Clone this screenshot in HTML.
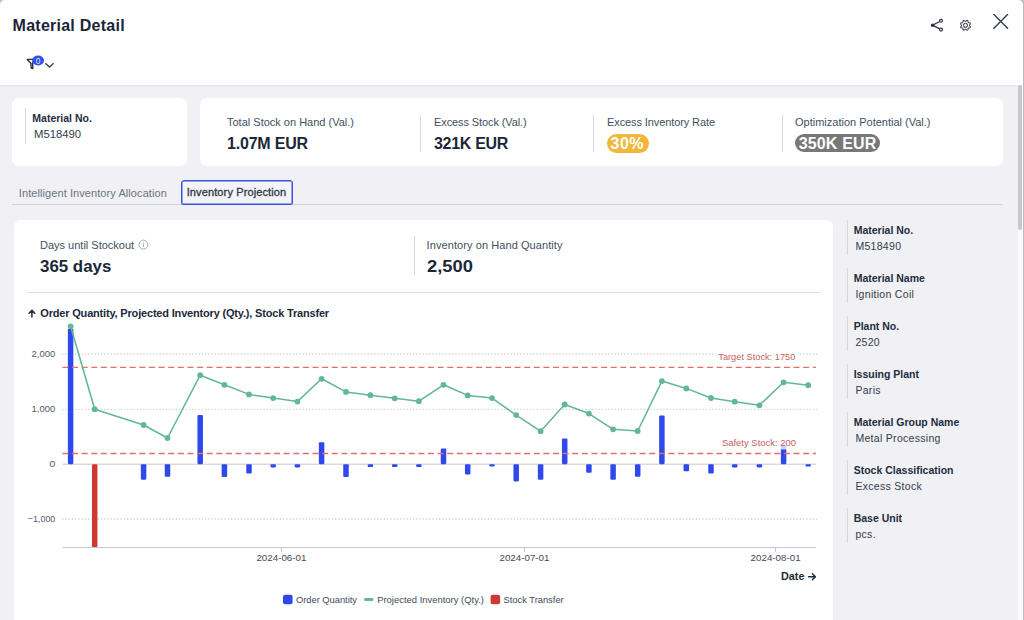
<!DOCTYPE html>
<html><head><meta charset="utf-8">
<style>
html,body{margin:0;padding:0;}
body{width:1024px;height:620px;overflow:hidden;position:relative;background:#bcbcc1;font-family:"Liberation Sans",sans-serif;color:#1d2d3e;}
#dlg{position:absolute;left:0;top:0;width:1023px;height:620px;background:#f0f0f5;border-radius:5px 5px 0 0;overflow:hidden;}
#hdr{position:absolute;left:0;top:0;width:1023px;height:84.6px;background:#fff;box-shadow:0 1px 1.5px rgba(40,40,80,0.05);z-index:1;}
.t{position:absolute;line-height:1;white-space:nowrap;}
.card{position:absolute;background:#fff;border-radius:6.5px;}
.vd{position:absolute;width:1px;background:#d5d9de;}
.lbl{font-size:11px;color:#434f5e;}
.val{font-size:16px;font-weight:700;color:#1b2738;}
.sl{font-size:10.5px;font-weight:700;color:#1d2d3e;}
.sv{font-size:10.5px;color:#323d4b;}
</style></head><body>
<div id="dlg">
  <div id="hdr">
    <div class="t" style="left:12.6px;top:17.7px;font-size:16px;font-weight:700;color:#1a2538;letter-spacing:0.25px">Material Detail</div>
    <!-- filter icon -->
    <svg style="position:absolute;left:20px;top:50px" width="40" height="25" viewBox="20 50 40 25">
      <path d="M27.2 59.4 L34 59.4 L32.6 63.2 L32.9 68.6 L31.2 68 L30.9 63.2 Z" fill="none" stroke="#2a3240" stroke-width="1.4" stroke-linejoin="round"/>
      <ellipse cx="38.1" cy="60.5" rx="5.9" ry="4.9" fill="#3150e6"/>
      <text x="38.1" y="63.6" font-size="8.4" fill="#dfe6ff" text-anchor="middle" font-family="Liberation Sans">0</text>
      <path d="M45.4 63.2 L49.5 67 L53.6 63.2" fill="none" stroke="#3a4250" stroke-width="1.3"/>
    </svg>
    <!-- share icon -->
    <svg style="position:absolute;left:925px;top:14px" width="90" height="22" viewBox="925 14 90 22">
      <path d="M939.8 21.5 L932.5 25.2 L939.8 28.9" fill="none" stroke="#2e3440" stroke-width="1.3"/>
      <circle cx="941" cy="20.8" r="1.45" fill="#fff" stroke="#2e3440" stroke-width="1.2"/>
      <circle cx="932.5" cy="25.2" r="1.7" fill="#2e3440"/>
      <circle cx="941" cy="29.6" r="1.45" fill="#fff" stroke="#2e3440" stroke-width="1.2"/>
      <g transform="translate(965.5 25.3) rotate(22.5)" fill="none" stroke="#4f5562" stroke-width="1.2"><path d="M5.20 0.00 L5.11 0.33 L4.86 0.64 L4.51 0.90 L4.15 1.11 L3.86 1.31 L3.70 1.53 L3.66 1.80 L3.72 2.15 L3.82 2.56 L3.89 2.98 L3.85 3.38 L3.68 3.68 L3.38 3.85 L2.98 3.89 L2.56 3.82 L2.15 3.72 L1.80 3.66 L1.53 3.70 L1.31 3.86 L1.11 4.15 L0.90 4.51 L0.64 4.86 L0.33 5.11 L0.00 5.20 L-0.33 5.11 L-0.64 4.86 L-0.90 4.51 L-1.11 4.15 L-1.31 3.86 L-1.53 3.70 L-1.80 3.66 L-2.15 3.72 L-2.56 3.82 L-2.98 3.89 L-3.38 3.85 L-3.68 3.68 L-3.85 3.38 L-3.89 2.98 L-3.82 2.56 L-3.72 2.15 L-3.66 1.80 L-3.70 1.53 L-3.86 1.31 L-4.15 1.11 L-4.51 0.90 L-4.86 0.64 L-5.11 0.33 L-5.20 0.00 L-5.11 -0.33 L-4.86 -0.64 L-4.51 -0.90 L-4.15 -1.11 L-3.86 -1.31 L-3.70 -1.53 L-3.66 -1.80 L-3.72 -2.15 L-3.82 -2.56 L-3.89 -2.98 L-3.85 -3.38 L-3.68 -3.68 L-3.38 -3.85 L-2.98 -3.89 L-2.56 -3.82 L-2.15 -3.72 L-1.80 -3.66 L-1.53 -3.70 L-1.31 -3.86 L-1.11 -4.15 L-0.90 -4.51 L-0.64 -4.86 L-0.33 -5.11 L-0.00 -5.20 L0.33 -5.11 L0.64 -4.86 L0.90 -4.51 L1.11 -4.15 L1.31 -3.86 L1.53 -3.70 L1.80 -3.66 L2.15 -3.72 L2.56 -3.82 L2.98 -3.89 L3.38 -3.85 L3.68 -3.68 L3.85 -3.38 L3.89 -2.98 L3.82 -2.56 L3.72 -2.15 L3.66 -1.80 L3.70 -1.53 L3.86 -1.31 L4.15 -1.11 L4.51 -0.90 L4.86 -0.64 L5.11 -0.33 Z" stroke-linejoin="round"/><circle cx="0" cy="0" r="2"/></g>
      <path d="M993.5 14 L1008 28.8 M1008 14 L993.5 28.8" stroke="#3a4656" stroke-width="1.5" fill="none"/>
    </svg>
  </div>

  <!-- card 1 -->
  <div class="card" style="left:12px;top:97.5px;width:175.2px;height:68.2px;"></div>
  <div class="vd" style="left:25px;top:107.5px;height:36px;"></div>
  <div class="t sl" style="left:32.3px;top:112.6px;">Material No.</div>
  <div class="t sv" style="left:33.8px;top:128.8px;transform:scaleX(1.075);transform-origin:0 0">M518490</div>

  <!-- card 2 KPI -->
  <div class="card" style="left:200.2px;top:97.5px;width:803px;height:68.8px;"></div>
  <div class="t lbl" style="left:227px;top:117.3px;">Total Stock on Hand (Val.)</div>
  <div class="t val" style="left:227px;top:135.8px;letter-spacing:-0.2px">1.07M EUR</div>
  <div class="vd" style="left:420px;top:115px;height:37px;"></div>
  <div class="t lbl" style="left:434px;top:117.3px;letter-spacing:-0.1px">Excess Stock (Val.)</div>
  <div class="t val" style="left:434px;top:135.8px;letter-spacing:-0.3px">321K EUR</div>
  <div class="vd" style="left:593px;top:115px;height:37px;"></div>
  <div class="t lbl" style="left:607px;top:117.3px;letter-spacing:-0.1px">Excess Inventory Rate</div>
  <div style="position:absolute;left:607px;top:133.6px;width:41.5px;height:19.4px;border-radius:10px;background:#f0b73a;"></div>
  <div class="t" style="left:610.5px;top:135.8px;font-size:16px;font-weight:700;color:#fff;letter-spacing:0.5px">30%</div>
  <div class="vd" style="left:781.5px;top:115px;height:37px;"></div>
  <div class="t lbl" style="left:795px;top:117.3px;">Optimization Potential (Val.)</div>
  <div style="position:absolute;left:795px;top:133.7px;width:85.3px;height:18.8px;border-radius:10px;background:#787878;"></div>
  <div class="t" style="left:798.7px;top:135.5px;font-size:16px;font-weight:700;color:#fff;letter-spacing:0.15px">350K EUR</div>

  <!-- tabs -->
  <div style="position:absolute;left:12px;top:204px;width:991px;height:1px;background:#cfd3da;"></div>
  <div class="t" style="left:18.8px;top:187.7px;font-size:11px;color:#6b7480;letter-spacing:0.08px">Intelligent Inventory Allocation</div>
  <div style="position:absolute;left:181px;top:180px;width:110px;height:23px;border:1px solid #3a55e0;box-shadow:inset 0 0 0 0.5px #3a55e0;border-radius:3px 3px 1.5px 1.5px;background:#f3f3f8;"></div>
  <div class="t" style="left:186.7px;top:187.2px;font-size:11px;color:#303846;letter-spacing:0.12px;-webkit-text-stroke:0.3px #303846">Inventory Projection</div>

  <!-- chart card -->
  <div class="card" style="left:14.4px;top:220.3px;width:818.4px;height:420px;"></div>
  <div class="t lbl" style="left:40px;top:239.7px;">Days until Stockout</div>
  <svg style="position:absolute;left:137px;top:239px" width="13" height="13" viewBox="137 239 13 13">
    <circle cx="143.4" cy="244.6" r="4.5" fill="none" stroke="#9aa3ad" stroke-width="0.9"/>
    <path d="M143.4 243.5 L143.4 247" stroke="#9aa3ad" stroke-width="0.9"/>
    <circle cx="143.4" cy="242.2" r="0.55" fill="#9aa3ad"/>
  </svg>
  <div class="t val" style="left:40.1px;top:258.6px;transform:scaleX(1.055);transform-origin:0 0">365 days</div>
  <div class="vd" style="left:413.5px;top:236px;height:39px;"></div>
  <div class="t lbl" style="left:426.6px;top:239.7px;letter-spacing:0.08px">Inventory on Hand Quantity</div>
  <div class="t val" style="left:427.2px;top:258.6px;transform:scaleX(1.145);transform-origin:0 0">2,500</div>
  <div style="position:absolute;left:27px;top:292px;width:793px;height:1.2px;background:#dcdfe4;"></div>

  <svg style="position:absolute;left:26px;top:307px" width="10" height="12" viewBox="26 307 10 12"><path d="M31.9 316.9 L31.9 310.4 M29.1 313.2 L31.9 310.4 L34.7 313.2" fill="none" stroke="#1d2a3a" stroke-width="1.5" stroke-linecap="round" stroke-linejoin="round"/></svg>
  <div class="t" style="left:40.3px;top:307.8px;font-size:11px;font-weight:700;color:#1d2a3a;letter-spacing:-0.18px">Order Quantity, Projected Inventory (Qty.), Stock Transfer</div>

  <svg id="chart" style="position:absolute;left:0;top:0" width="1023" height="620" viewBox="0 0 1023 620">
<line x1="62" y1="354" x2="817.5" y2="354" stroke="#cfd2d8" stroke-width="1.3" stroke-dasharray="1.3 1.95"/>
<line x1="62" y1="409.3" x2="817.5" y2="409.3" stroke="#cfd2d8" stroke-width="1.3" stroke-dasharray="1.3 1.95"/>
<line x1="62" y1="519" x2="817.5" y2="519" stroke="#cfd2d8" stroke-width="1.3" stroke-dasharray="1.3 1.95"/>
<line x1="62.5" y1="464.2" x2="816" y2="464.2" stroke="#c3c8d4" stroke-width="1"/>
<line x1="62.5" y1="547.5" x2="816" y2="547.5" stroke="#c3c7d0" stroke-width="1.1"/>
<line x1="281.4" y1="547.2" x2="281.4" y2="552" stroke="#b8bcc3" stroke-width="0.9"/>
<line x1="524.5" y1="547.2" x2="524.5" y2="552" stroke="#b8bcc3" stroke-width="0.9"/>
<line x1="775.6" y1="547.2" x2="775.6" y2="552" stroke="#b8bcc3" stroke-width="0.9"/>
<text x="31.599999999999998" y="356.6" font-size="9.6" fill="#4f5b69" font-family="Liberation Sans" textLength="23.7" lengthAdjust="spacingAndGlyphs">2,000</text>
<text x="31.599999999999998" y="411.9" font-size="9.6" fill="#4f5b69" font-family="Liberation Sans" textLength="23.7" lengthAdjust="spacingAndGlyphs">1,000</text>
<text x="49.5" y="467.3" font-size="9.6" fill="#4f5b69" font-family="Liberation Sans" textLength="5.8" lengthAdjust="spacingAndGlyphs">0</text>
<text x="27.799999999999997" y="521.9" font-size="9.6" fill="#4f5b69" font-family="Liberation Sans" textLength="27.5" lengthAdjust="spacingAndGlyphs">−1,000</text>
<text x="281.4" y="560.8" font-size="9.8" fill="#3f4a58" text-anchor="middle" font-family="Liberation Sans" textLength="50" lengthAdjust="spacingAndGlyphs">2024-06-01</text>
<text x="524.5" y="560.8" font-size="9.8" fill="#3f4a58" text-anchor="middle" font-family="Liberation Sans" textLength="50" lengthAdjust="spacingAndGlyphs">2024-07-01</text>
<text x="775.6" y="560.8" font-size="9.8" fill="#3f4a58" text-anchor="middle" font-family="Liberation Sans" textLength="50" lengthAdjust="spacingAndGlyphs">2024-08-01</text>
<rect x="67.85" y="328.70" width="5.5" height="135.50" rx="1.1" fill="#2f48ec"/>
<rect x="91.95" y="464.20" width="5.5" height="82.80" rx="1.1" fill="#cc3a33"/>
<rect x="140.85" y="464.20" width="5.5" height="15.50" rx="1.1" fill="#2f48ec"/>
<rect x="164.75" y="464.20" width="5.5" height="12.60" rx="1.1" fill="#2f48ec"/>
<rect x="197.45" y="415.10" width="5.5" height="49.10" rx="1.1" fill="#2f48ec"/>
<rect x="221.65" y="464.20" width="5.5" height="12.80" rx="1.1" fill="#2f48ec"/>
<rect x="246.25" y="464.20" width="5.5" height="9.40" rx="1.1" fill="#2f48ec"/>
<rect x="270.45" y="464.20" width="5.5" height="3.20" rx="1.1" fill="#2f48ec"/>
<rect x="294.65" y="464.20" width="5.5" height="3.20" rx="1.1" fill="#2f48ec"/>
<rect x="318.85" y="442.20" width="5.5" height="22.00" rx="1.1" fill="#2f48ec"/>
<rect x="343.25" y="464.20" width="5.5" height="12.80" rx="1.1" fill="#2f48ec"/>
<rect x="367.65" y="464.20" width="5.5" height="2.80" rx="1.1" fill="#2f48ec"/>
<rect x="391.95" y="464.20" width="5.5" height="2.80" rx="1.1" fill="#2f48ec"/>
<rect x="416.15" y="464.20" width="5.5" height="2.80" rx="1.1" fill="#2f48ec"/>
<rect x="440.75" y="448.60" width="5.5" height="15.60" rx="1.1" fill="#2f48ec"/>
<rect x="464.95" y="464.20" width="5.5" height="10.30" rx="1.1" fill="#2f48ec"/>
<rect x="489.25" y="464.20" width="5.5" height="2.20" rx="1.1" fill="#2f48ec"/>
<rect x="513.45" y="464.20" width="5.5" height="17.20" rx="1.1" fill="#2f48ec"/>
<rect x="537.85" y="464.20" width="5.5" height="15.60" rx="1.1" fill="#2f48ec"/>
<rect x="561.95" y="438.40" width="5.5" height="25.80" rx="1.1" fill="#2f48ec"/>
<rect x="586.15" y="464.20" width="5.5" height="8.60" rx="1.1" fill="#2f48ec"/>
<rect x="610.35" y="464.20" width="5.5" height="15.60" rx="1.1" fill="#2f48ec"/>
<rect x="634.95" y="464.20" width="5.5" height="12.60" rx="1.1" fill="#2f48ec"/>
<rect x="659.15" y="415.50" width="5.5" height="48.70" rx="1.1" fill="#2f48ec"/>
<rect x="683.55" y="464.20" width="5.5" height="7.10" rx="1.1" fill="#2f48ec"/>
<rect x="708.25" y="464.20" width="5.5" height="9.30" rx="1.1" fill="#2f48ec"/>
<rect x="731.95" y="464.20" width="5.5" height="3.20" rx="1.1" fill="#2f48ec"/>
<rect x="756.65" y="464.20" width="5.5" height="3.20" rx="1.1" fill="#2f48ec"/>
<rect x="780.85" y="444.50" width="5.5" height="19.70" rx="1.1" fill="#2f48ec"/>
<rect x="805.45" y="464.20" width="5.5" height="2.30" rx="1.1" fill="#2f48ec"/>
<line x1="62.4" y1="367.3" x2="816" y2="367.3" stroke="#e36e6c" stroke-width="1.3" stroke-dasharray="6 3.62"/>
<line x1="62.4" y1="453.5" x2="816" y2="453.5" stroke="#e36e6c" stroke-width="1.3" stroke-dasharray="6 3.62"/>
<polyline points="70.6,326.3 94.7,409.2 143.6,425 167.5,438 200.2,375.2 224.4,384.8 249,394.4 273.2,398.1 297.4,401.6 321.6,378.8 346,391.9 370.4,395.2 394.7,398.3 418.9,401.2 443.5,384.8 467.7,395.4 492,398.1 516.2,415.1 540.6,431.2 564.7,404.5 588.9,413.6 613.1,429.3 637.7,431 661.9,381.1 686.3,388.4 711,398 734.7,401.7 759.4,405.3 783.6,382.3 808.2,385.2" fill="none" stroke="#62b893" stroke-width="1.55" stroke-linejoin="round"/>
<circle cx="70.6" cy="326.3" r="2.9" fill="#62b893"/>
<circle cx="94.7" cy="409.2" r="2.9" fill="#62b893"/>
<circle cx="143.6" cy="425" r="2.9" fill="#62b893"/>
<circle cx="167.5" cy="438" r="2.9" fill="#62b893"/>
<circle cx="200.2" cy="375.2" r="2.9" fill="#62b893"/>
<circle cx="224.4" cy="384.8" r="2.9" fill="#62b893"/>
<circle cx="249" cy="394.4" r="2.9" fill="#62b893"/>
<circle cx="273.2" cy="398.1" r="2.9" fill="#62b893"/>
<circle cx="297.4" cy="401.6" r="2.9" fill="#62b893"/>
<circle cx="321.6" cy="378.8" r="2.9" fill="#62b893"/>
<circle cx="346" cy="391.9" r="2.9" fill="#62b893"/>
<circle cx="370.4" cy="395.2" r="2.9" fill="#62b893"/>
<circle cx="394.7" cy="398.3" r="2.9" fill="#62b893"/>
<circle cx="418.9" cy="401.2" r="2.9" fill="#62b893"/>
<circle cx="443.5" cy="384.8" r="2.9" fill="#62b893"/>
<circle cx="467.7" cy="395.4" r="2.9" fill="#62b893"/>
<circle cx="492" cy="398.1" r="2.9" fill="#62b893"/>
<circle cx="516.2" cy="415.1" r="2.9" fill="#62b893"/>
<circle cx="540.6" cy="431.2" r="2.9" fill="#62b893"/>
<circle cx="564.7" cy="404.5" r="2.9" fill="#62b893"/>
<circle cx="588.9" cy="413.6" r="2.9" fill="#62b893"/>
<circle cx="613.1" cy="429.3" r="2.9" fill="#62b893"/>
<circle cx="637.7" cy="431" r="2.9" fill="#62b893"/>
<circle cx="661.9" cy="381.1" r="2.9" fill="#62b893"/>
<circle cx="686.3" cy="388.4" r="2.9" fill="#62b893"/>
<circle cx="711" cy="398" r="2.9" fill="#62b893"/>
<circle cx="734.7" cy="401.7" r="2.9" fill="#62b893"/>
<circle cx="759.4" cy="405.3" r="2.9" fill="#62b893"/>
<circle cx="783.6" cy="382.3" r="2.9" fill="#62b893"/>
<circle cx="808.2" cy="385.2" r="2.9" fill="#62b893"/>
<rect x="715" y="347.5" width="83" height="14" fill="#fff" fill-opacity="0.9"/>
<rect x="718.5" y="436.5" width="81" height="13" fill="#fff" fill-opacity="0.75"/>
<text x="718.3" y="359.8" font-size="9.3" fill="#c6625e" font-family="Liberation Sans" textLength="77" lengthAdjust="spacingAndGlyphs">Target Stock: 1750</text>
<text x="721.9" y="445.7" font-size="9.3" fill="#c6625e" font-family="Liberation Sans" textLength="74.2" lengthAdjust="spacingAndGlyphs">Safety Stock: 200</text>
<text x="781" y="580" font-size="10.8" font-weight="700" fill="#1d2a3a" font-family="Liberation Sans">Date</text>
<path d="M808.6 576.8 L815.2 576.8 M812.4 573.8 L815.4 576.8 L812.4 579.8" fill="none" stroke="#1d2a3a" stroke-width="1.4" stroke-linecap="round" stroke-linejoin="round"/>
<rect x="283" y="594.8" width="9.6" height="9.4" rx="2" fill="#2f48ec"/>
<text x="296" y="602.6" font-size="9.4" fill="#3f4a58" font-family="Liberation Sans" textLength="61" lengthAdjust="spacingAndGlyphs">Order Quantity</text>
<rect x="364" y="598" width="9.5" height="3" rx="1.5" fill="#62b893"/>
<text x="377.2" y="602.6" font-size="9.4" fill="#3f4a58" font-family="Liberation Sans" textLength="106.8" lengthAdjust="spacingAndGlyphs">Projected Inventory (Qty.)</text>
<rect x="490.6" y="594.8" width="9.5" height="9.4" rx="2" fill="#cc3a33"/>
<text x="503.5" y="602.6" font-size="9.4" fill="#3f4a58" font-family="Liberation Sans" textLength="60.2" lengthAdjust="spacingAndGlyphs">Stock Transfer</text>
</svg>

  <!-- sidebar -->
  <div id="side">
<div class="vd" style="left:846.5px;top:219.7px;height:35px;"></div>
<div class="t sl" style="left:853.7px;top:224.81px;">Material No.</div>
<div class="t sv" style="left:855.4px;top:240.61px;letter-spacing:0.3px">M518490</div>
<div class="vd" style="left:846.5px;top:267.8px;height:35px;"></div>
<div class="t sl" style="left:853.7px;top:272.91px;">Material Name</div>
<div class="t sv" style="left:855.4px;top:288.71px;letter-spacing:0.3px">Ignition Coil</div>
<div class="vd" style="left:846.5px;top:315.9px;height:35px;"></div>
<div class="t sl" style="left:853.7px;top:321.01px;">Plant No.</div>
<div class="t sv" style="left:855.4px;top:336.81px;letter-spacing:0.3px">2520</div>
<div class="vd" style="left:846.5px;top:364.0px;height:35px;"></div>
<div class="t sl" style="left:853.7px;top:369.11px;">Issuing Plant</div>
<div class="t sv" style="left:855.4px;top:384.91px;letter-spacing:0.3px">Paris</div>
<div class="vd" style="left:846.5px;top:412.1px;height:35px;"></div>
<div class="t sl" style="left:853.7px;top:417.21px;">Material Group Name</div>
<div class="t sv" style="left:855.4px;top:433.01px;letter-spacing:0.3px">Metal Processing</div>
<div class="vd" style="left:846.5px;top:460.2px;height:35px;"></div>
<div class="t sl" style="left:853.7px;top:465.31px;">Stock Classification</div>
<div class="t sv" style="left:855.4px;top:481.11px;letter-spacing:0.3px">Excess Stock</div>
<div class="vd" style="left:846.5px;top:508.3px;height:35px;"></div>
<div class="t sl" style="left:853.7px;top:513.41px;">Base Unit</div>
<div class="t sv" style="left:855.4px;top:529.21px;letter-spacing:0.3px">pcs.</div>
</div><!--endside-->

  <!-- scrollbar -->
  <div style="position:absolute;left:1018px;top:85px;width:5px;height:535px;background:#fafafc;"></div>
  <div style="position:absolute;left:1017.5px;top:84.5px;width:4.5px;height:145px;border-radius:3px;background:#c6c8ce;"></div>
</div>
</body></html>
